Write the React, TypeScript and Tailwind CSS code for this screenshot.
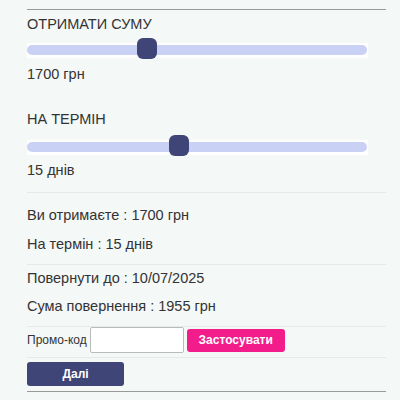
import { useState } from 'react'

function Slider({ left }: { left: number }) {
  return (
    <div className="relative h-[15px] w-[341px] bg-white">
      <div className="absolute left-0 right-[1px] top-[2px] h-[10px] rounded-full bg-[#c9d2f5]" />
      <div
        className="absolute top-[-5px] h-[21px] w-[20px] rounded-[6px] bg-[#3f4577]"
        style={{ left }}
      />
    </div>
  )
}

export default function App() {
  const [promo, setPromo] = useState('')
  return (
    <div
      className="min-h-[400px] bg-[#f4f8f7] pt-[9px] text-[#333]"
      style={{ fontFamily: '"Liberation Sans", Arial, sans-serif' }}
    >
      <div className="ml-[27px] w-[359px] border-t border-[#999]">
        <p className="mt-[6px] text-[14.5px] leading-[17px]">ОТРИМАТИ СУМУ</p>
        <div className="mt-[10px]">
          <Slider left={110} />
        </div>
        <p className="mt-[8px] text-[14.5px] leading-[17px]">1700 грн</p>

        <p className="mt-[28px] text-[14.5px] leading-[17px]">НА ТЕРМІН</p>
        <div className="mt-[12px]">
          <Slider left={142} />
        </div>
        <p className="mt-[7px] text-[14.5px] leading-[17px]">15 днів</p>

        <div className="mt-[13px] border-t border-[#e6ebea]" />
        <p className="mt-[14px] text-[14.5px] leading-[17px]">Ви отримаєте : 1700 грн</p>
        <p className="mt-[12px] text-[14.5px] leading-[17px]">На термін : 15 днів</p>

        <div className="mt-[11px] border-t border-[#e6ebea]" />
        <p className="mt-[5px] text-[14.5px] leading-[17px]">Повернути до : 10/07/2025</p>
        <p className="mt-[11px] text-[14.5px] leading-[17px]">Сума повернення : 1955 грн</p>

        <div className="mt-[11px] border-t border-[#e6ebea]" />
        <div className="flex h-[26px] items-center">
          <span className="text-[12px] leading-[14px]">Промо-код</span>
          <input
            value={promo}
            onChange={e => setPromo(e.target.value)}
            className="ml-[3px] h-[26px] w-[94px] rounded-[2px] border border-[#bbb] bg-white px-1 text-[12px] outline-none"
          />
          <button className="ml-[3px] h-[23px] w-[98px] rounded-[3px] bg-[#f21d8b] text-[12px] font-bold text-white">
            Застосувати
          </button>
        </div>
        <div className="mt-[4px] border-t border-[#e6ebea]" />
        <button className="mt-[4px] h-[24px] w-[97px] rounded-[3px] bg-[#3f4577] text-[12px] font-bold text-white">
          Далі
        </button>
        <div className="mt-[5px] border-t border-[#999]" />
      </div>
    </div>
  )
}
